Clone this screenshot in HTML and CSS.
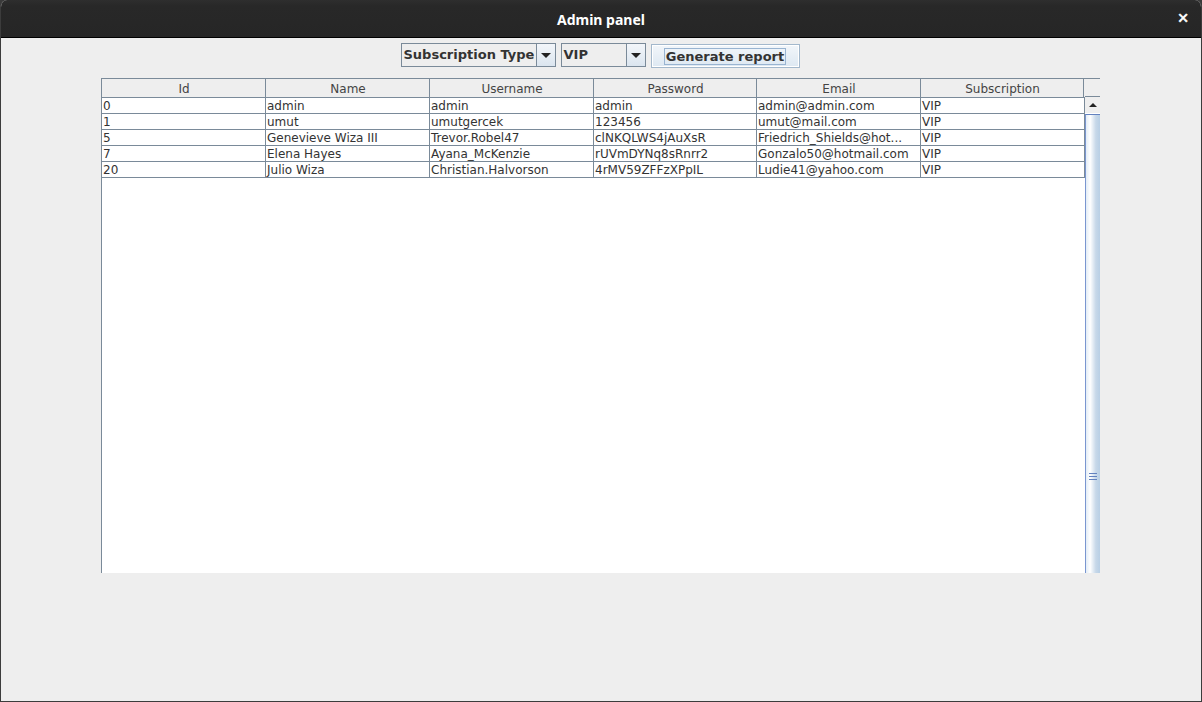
FILE: index.html
```html
<!DOCTYPE html>
<html lang="en">
<head>
    <meta charset="UTF-8">
    <title>Admin panel</title>
    <link rel="stylesheet" href="styles.css">
</head>
<body>
    <div class="window">
        <div class="titlebar">
            <span class="title">Admin panel</span>
            <span class="close">&#x2715;</span>
        </div>

        <div class="content">
            <div class="toolbar">
                <div class="combo combo-type">
                    <span class="combo-text">Subscription Type</span>
                    <span class="combo-arrow"><span class="tri-down"></span></span>
                </div>
                <div class="combo combo-vip">
                    <span class="combo-text">VIP</span>
                    <span class="combo-arrow"><span class="tri-down"></span></span>
                </div>
                <button class="report-btn"><span class="focus">Generate report</span></button>
            </div>

            <div class="table-pane">
                <div class="table-area">
                    <div class="row header">
                        <div class="cell">Id</div>
                        <div class="cell">Name</div>
                        <div class="cell">Username</div>
                        <div class="cell">Password</div>
                        <div class="cell">Email</div>
                        <div class="cell">Subscription</div>
                    </div>
                    <div class="body">
                        <div class="row">
                            <div class="cell">0</div>
                            <div class="cell">admin</div>
                            <div class="cell">admin</div>
                            <div class="cell">admin</div>
                            <div class="cell">admin@admin.com</div>
                            <div class="cell">VIP</div>
                        </div>
                        <div class="row">
                            <div class="cell">1</div>
                            <div class="cell">umut</div>
                            <div class="cell">umutgercek</div>
                            <div class="cell">123456</div>
                            <div class="cell">umut@mail.com</div>
                            <div class="cell">VIP</div>
                        </div>
                        <div class="row">
                            <div class="cell">5</div>
                            <div class="cell">Genevieve Wiza III</div>
                            <div class="cell">Trevor.Robel47</div>
                            <div class="cell">clNKQLWS4jAuXsR</div>
                            <div class="cell">Friedrich_Shields@hot...</div>
                            <div class="cell">VIP</div>
                        </div>
                        <div class="row">
                            <div class="cell">7</div>
                            <div class="cell">Elena Hayes</div>
                            <div class="cell">Ayana_McKenzie</div>
                            <div class="cell">rUVmDYNq8sRnrr2</div>
                            <div class="cell">Gonzalo50@hotmail.com</div>
                            <div class="cell">VIP</div>
                        </div>
                        <div class="row">
                            <div class="cell">20</div>
                            <div class="cell">Julio Wiza</div>
                            <div class="cell">Christian.Halvorson</div>
                            <div class="cell">4rMV59ZFFzXPpIL</div>
                            <div class="cell">Ludie41@yahoo.com</div>
                            <div class="cell">VIP</div>
                        </div>
                    </div>
                </div>

                <div class="scrollbar">
                    <div class="corner"></div>
                    <div class="arrow-up"><span class="tri-up"></span></div>
                    <div class="thumb"><span class="grip"></span></div>
                </div>
            </div>
        </div>
    </div>
</body>
</html>
```

FILE: styles.css
```css
body {
    margin: 0;
    background-color: #3a3a3a;
    font-family: 'DejaVu Sans', sans-serif;
}

.window {
    width: 1202px;
    height: 702px;
    box-sizing: border-box;
    background-color: #eeeeee;
    border: 1px solid #3c3c3c;
    border-top: none;
    border-radius: 7px 7px 0 0;
    overflow: hidden;
}

.titlebar {
    height: 37px;
    background: linear-gradient(#2e2e2e, #282828 6px, #262626);
    border-bottom: 1px solid #000;
    display: flex;
    align-items: center;
    justify-content: center;
    position: relative;
}

.title {
    color: #ffffff;
    font-family: 'Noto Sans', sans-serif;
    font-weight: bold;
    font-size: 14px;
    margin-top: 2px;
}

.close {
    position: absolute;
    right: 12px;
    top: 10px;
    color: #ffffff;
    font-size: 14px;
    font-weight: bold;
    -webkit-text-stroke: 0.6px #ffffff;
}

.content {
    padding-top: 5px;
}

/* toolbar */

.toolbar {
    display: flex;
    justify-content: center;
    gap: 5px;
    height: 25px;
    padding-right: 2px;
}

.combo {
    display: flex;
    height: 24px;
    box-sizing: border-box;
    border: 1px solid #7a8a99;
    background-color: #eeeeee;
    font-size: 13px;
    font-weight: bold;
    color: #333;
}

.combo-type {
    width: 155px;
}

.combo-vip {
    width: 85px;
}

.combo-text {
    flex: 1;
    padding-left: 2px;
    line-height: 22px;
    border-right: 1px solid #7a8a99;
}

.combo-arrow {
    width: 18px;
    background: linear-gradient(#f3f6fa, #dbe5ef);
    display: flex;
    align-items: center;
    justify-content: center;
}

.tri-down {
    width: 0;
    height: 0;
    border-left: 5px solid transparent;
    border-right: 5px solid transparent;
    border-top: 5px solid #222;
    margin-top: 1px;
}

.report-btn {
    width: 149px;
    height: 24px;
    margin-top: 1px;
    padding: 0;
    border: 1px solid #a3b8cc;
    box-shadow: inset 0 0 0 1px #ffffff;
    background: linear-gradient(#f2f6fa, #dde8f2);
    font-family: 'DejaVu Sans', sans-serif;
    font-size: 13px;
    font-weight: bold;
    color: #333;
}

.focus {
    border: 1px solid #99b4d1;
    padding: 0 1px;
}

/* table */

.table-pane {
    display: flex;
    margin-top: 10px;
    margin-left: 100px;
    width: 999px;
    height: 495px;
    overflow: hidden;
}

.table-area {
    width: 983px;
    flex: none;
    background-color: #ffffff;
    border-left: 1px solid #7a8a99;
    border-top: 1px solid #7a8a99;
}

.row {
    display: grid;
    grid-template-columns: 164px 164px 164px 163px 164px 163px;
    height: 16px;
    width: 983px;
    border-bottom: 1px solid #7a8a99;
    box-sizing: border-box;
    font-size: 12px;
    color: #333;
}

.row .cell {
    border-right: 1px solid #7a8a99;
    padding-left: 1px;
    line-height: 17px;
    white-space: nowrap;
    overflow: hidden;
}

.body .row .cell:last-child {
    border-right: none;
}

.body .row {
    border-right: 1px solid #7a8a99;
}

.row.header {
    height: 19px;
    background-color: #eeeeee;
}

.row.header .cell {
    text-align: center;
    line-height: 20px;
    color: #444;
}

.scrollbar {
    width: 16px;
    flex: none;
    display: flex;
    flex-direction: column;
}

.corner {
    height: 19px;
    flex: none;
    box-sizing: border-box;
    border: 1px solid #7a8a99;
    border-left: none;
    background-color: #eeeeee;
}

.arrow-up {
    height: 16px;
    flex: none;
    background-color: #eeeeee;
    display: flex;
    align-items: center;
    justify-content: center;
    border-bottom: 1px solid #ffffff;
}

.tri-up {
    width: 0;
    height: 0;
    border-left: 4px solid transparent;
    border-right: 4px solid transparent;
    border-bottom: 4px solid #222;
}

.thumb {
    height: 722px;
    flex: none;
    box-sizing: border-box;
    border: 1px solid #6382bf;
    border-left-color: #7a96d0;
    background: linear-gradient(to right, #e3edf6, #ffffff 30%, #c7d8e9 70%, #b8cfe5);
    display: flex;
    align-items: center;
    justify-content: center;
}

.grip {
    width: 8px;
    height: 5px;
    margin-top: 2px;
    border-top: 1px solid #6382bf;
    border-bottom: 1px solid #6382bf;
    background: linear-gradient(transparent 2px, #6382bf 2px, #6382bf 3px, transparent 3px);
}
```
